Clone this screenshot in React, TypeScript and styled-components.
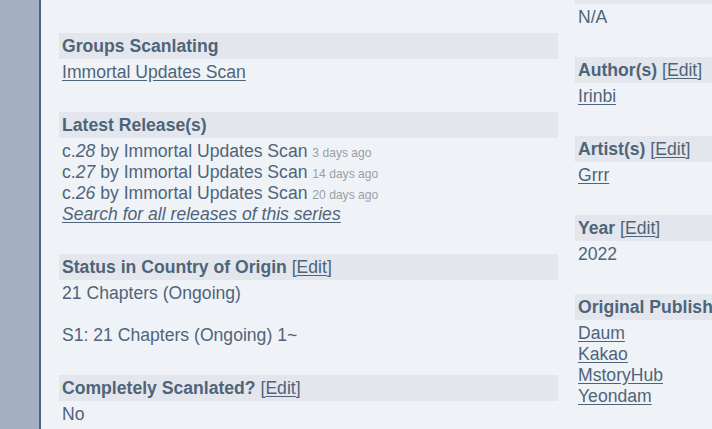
import React from "react";
import styled, { createGlobalStyle } from "styled-components";

const Global = createGlobalStyle`
  html, body { margin: 0; padding: 0; }
  body {
    background: #eff3f8;
    font-family: "Liberation Sans", Arial, sans-serif;
    font-size: 17.6px;
    color: #4f6479;
    overflow: hidden;
  }
`;

const Page = styled.div`
  display: flex;
  height: 100vh;
  width: 712px;
  overflow: hidden;
`;

const Sidebar = styled.div`
  flex: 0 0 39px;
  background: #a2b0c2;
  border-right: 2px solid #4e6379;
`;

const Main = styled.div`
  display: flex;
  gap: 17px;
  padding-left: 18px;
  flex: 1;
  min-width: 0;
`;

const Column = styled.div<{ $width?: number; $offset?: number }>`
  flex: 0 0 ${(p) => (p.$width ? `${p.$width}px` : "300px")};
  margin-top: ${(p) => p.$offset ?? 0}px;
`;

const Section = styled.div`
  margin-bottom: 29.5px;
`;

const Header = styled.div`
  background: #e3e7ed;
  font-weight: bold;
  line-height: 21px;
  padding: 2.5px 3px;
  white-space: nowrap;
`;

const EditWrap = styled.span`
  font-weight: normal;
`;

const Content = styled.div`
  line-height: 21px;
  padding: 2.5px 3px 0;
  white-space: nowrap;
`;

const Link = styled.a`
  color: #4f6479;
  text-decoration: underline;
  text-underline-offset: 2px;
  cursor: pointer;
`;

const Plain = styled.span``;

const Chapter = styled.i``;

const Ago = styled.span`
  font-size: 12.1px;
  line-height: 1;
  color: #9a9fa5;
`;

const Spacer = styled.div`
  height: 21px;
`;

const Line = styled.div`
  height: 21px;
`;

const Edit = () => (
  <EditWrap>
    {" "}[<Link>Edit</Link>]
  </EditWrap>
);

const releases = [
  { c: "28", ago: "3 days ago" },
  { c: "27", ago: "14 days ago" },
  { c: "26", ago: "20 days ago" },
];

export default function App() {
  return (
    <>
      <Global />
      <Page>
        <Sidebar />
        <Main>
          <Column $width={499} $offset={33}>
            <Section>
              <Header>Groups Scanlating</Header>
              <Content>
                <Link>Immortal Updates Scan</Link>
              </Content>
            </Section>
            <Section>
              <Header>Latest Release(s)</Header>
              <Content>
                {releases.map((r) => (
                  <Line key={r.c}>
                    c.<Chapter>{r.c}</Chapter> by <Plain>Immortal Updates Scan</Plain>{" "}
                    <Ago>{r.ago}</Ago>
                  </Line>
                ))}
                <Line>
                  <Link>
                    <i>Search for all releases of this series</i>
                  </Link>
                </Line>
              </Content>
            </Section>
            <Section>
              <Header>
                Status in Country of Origin
                <Edit />
              </Header>
              <Content>
                <Line>21 Chapters (Ongoing)</Line>
                <Spacer />
                <Line>S1: 21 Chapters (Ongoing) 1~</Line>
              </Content>
            </Section>
            <Section>
              <Header>
                Completely Scanlated?
                <Edit />
              </Header>
              <Content>No</Content>
            </Section>
          </Column>
          <Column $width={300} $offset={-22}>
            <Section>
              <Header>Recommendations</Header>
              <Content>N/A</Content>
            </Section>
            <Section>
              <Header>
                Author(s)
                <Edit />
              </Header>
              <Content>
                <Link>Irinbi</Link>
              </Content>
            </Section>
            <Section>
              <Header>
                Artist(s)
                <Edit />
              </Header>
              <Content>
                <Link>Grrr</Link>
              </Content>
            </Section>
            <Section>
              <Header>
                Year
                <Edit />
              </Header>
              <Content>2022</Content>
            </Section>
            <Section>
              <Header>Original Publisher</Header>
              <Content>
                <Line><Link>Daum</Link></Line>
                <Line><Link>Kakao</Link></Line>
                <Line><Link>MstoryHub</Link></Line>
                <Line><Link>Yeondam</Link></Line>
              </Content>
            </Section>
          </Column>
        </Main>
      </Page>
    </>
  );
}
